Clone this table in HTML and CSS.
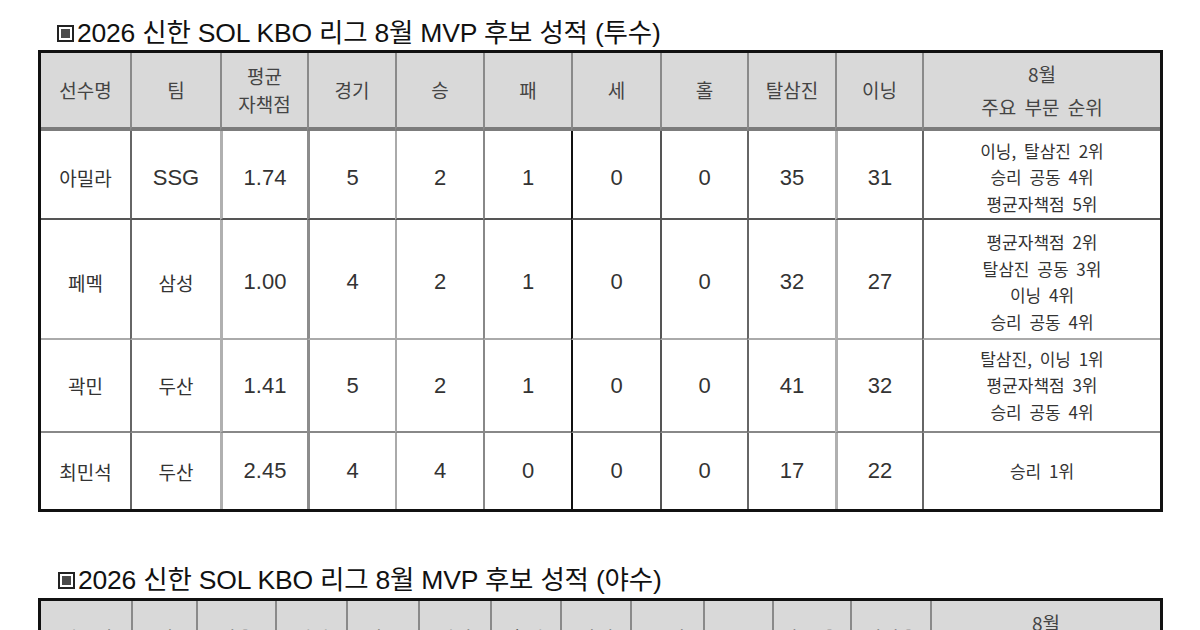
FILE: index.html
```html
<!DOCTYPE html>
<html lang="ko">
<head>
<meta charset="utf-8">
<title>2026 신한 SOL KBO 리그 8월 MVP 후보 성적</title>
<link rel="stylesheet" href="styles.css">
</head>
<body>
<div class="page">
  <h2 class="title"><span class="sq"></span>2026 신한 SOL KBO 리그 8월 MVP 후보 성적 (투수)</h2>
  <table class="stats pit">
    <colgroup>
      <col><col><col><col><col><col><col><col><col><col><col>
    </colgroup>
    <thead>
      <tr>
        <th>선수명</th><th>팀</th><th class="two">평균<br>자책점</th><th>경기</th><th>승</th><th>패</th><th>세</th><th>홀</th><th>탈삼진</th><th>이닝</th><th class="two wide">8월<br>주요 부문 순위</th>
      </tr>
    </thead>
    <tbody>
      <tr class="r1">
        <td class="k">아밀라</td><td>SSG</td><td>1.74</td><td>5</td><td>2</td><td>1</td><td>0</td><td>0</td><td>35</td><td>31</td><td class="rk">이닝, 탈삼진 2위<br>승리 공동 4위<br>평균자책점 5위</td>
      </tr>
      <tr class="r2">
        <td class="k">페멕</td><td class="k">삼성</td><td>1.00</td><td>4</td><td>2</td><td>1</td><td>0</td><td>0</td><td>32</td><td>27</td><td class="rk">평균자책점 2위<br>탈삼진 공동 3위<br>이닝 4위<br>승리 공동 4위</td>
      </tr>
      <tr class="r3">
        <td class="k">곽민</td><td class="k">두산</td><td>1.41</td><td>5</td><td>2</td><td>1</td><td>0</td><td>0</td><td>41</td><td>32</td><td class="rk">탈삼진, 이닝 1위<br>평균자책점 3위<br>승리 공동 4위</td>
      </tr>
      <tr class="r4">
        <td class="k">최민석</td><td class="k">두산</td><td>2.45</td><td>4</td><td>4</td><td>0</td><td>0</td><td>0</td><td>17</td><td>22</td><td class="rk">승리 1위</td>
      </tr>
    </tbody>
  </table>

  <h2 class="title t2"><span class="sq"></span>2026 신한 SOL KBO 리그 8월 MVP 후보 성적 (야수)</h2>
  <table class="stats bat">
    <colgroup>
      <col><col><col><col><col><col><col><col><col><col><col><col><col>
    </colgroup>
    <thead>
      <tr>
        <th>선수명</th><th>팀</th><th>타율</th><th>경기</th><th>타수</th><th>안타</th><th>홈런</th><th>타점</th><th>득점</th><th>도루</th><th>출루율</th><th>장타율</th><th class="two wide">8월<br>주요 부문 순위</th>
      </tr>
    </thead>
  </table>
</div>
</body>
</html>
```

FILE: styles.css
```css
html, body {
  margin: 0;
  padding: 0;
  background: #fff;
  overflow: hidden;
  height: 630px;
}

.page {
  padding: 18px 0 0 38px;
  font-family: "Liberation Sans", "Noto Sans CJK KR", sans-serif;
  color: #333;
}

.title {
  margin: 0 0 2px 0;
  padding-left: 19px;
  height: 30px;
  line-height: 30px;
  font-size: 26.5px;
  font-weight: normal;
  color: #111;
  display: flex;
  align-items: center;
  white-space: nowrap;
  letter-spacing: -0.2px;
}

.title.t2 {
  margin-top: 53px;
  margin-bottom: 3px;
  padding-left: 20px;
}

.sq {
  width: 17px;
  height: 17px;
  box-sizing: border-box;
  border: 2px solid #222;
  background: #4a4a4a;
  box-shadow: inset 0 0 0 2px #fff;
  margin-right: 3px;
  flex: none;
}

.stats {
  width: 1125px;
  table-layout: fixed;
  border-collapse: separate;
  border-spacing: 0;
  border: 3px solid #111;
}

.stats th,
.stats td {
  padding: 0;
  text-align: center;
  vertical-align: middle;
  box-sizing: border-box;
}

.stats th {
  background: #d9d9d9;
  color: #444;
  font-size: 19px;
  font-weight: normal;
  height: 78px;
  line-height: 28px;
  border-bottom: 4px solid #7c7c7c;
  font-family: "Noto Sans CJK KR", "Liberation Sans", sans-serif;
}

.stats th + th {
  border-left: 2px solid #8a8a8a;
}

.stats th.wide {
  line-height: 33px;
  word-spacing: 3px;
}

.stats td {
  font-size: 22px;
  color: #333;
}

.stats td.k {
  font-size: 19px;
  font-family: "Noto Sans CJK KR", "Liberation Sans", sans-serif;
}

.stats td.rk {
  font-size: 17px;
  line-height: 26.5px;
  word-spacing: 3px;
  font-family: "Noto Sans CJK KR", "Liberation Sans", sans-serif;
}

/* pitcher table column widths */
.pit col:nth-child(1) { width: 89px; }
.pit col:nth-child(2) { width: 90px; }
.pit col:nth-child(3) { width: 87px; }
.pit col:nth-child(4) { width: 88px; }
.pit col:nth-child(5) { width: 88px; }
.pit col:nth-child(6) { width: 88px; }
.pit col:nth-child(7) { width: 89px; }
.pit col:nth-child(8) { width: 87px; }
.pit col:nth-child(9) { width: 88px; }
.pit col:nth-child(10) { width: 87px; }
.pit col:nth-child(11) { width: 238px; }

/* body column rules */
.pit td + td { border-left: 2px solid #888; }
.pit td:nth-child(2) { border-left-color: #666; }
.pit td:nth-child(3) { border-left: 3px solid #b0b0b0; }
.pit td:nth-child(4) { border-left: 3px solid #8c8c8c; }
.pit td:nth-child(5) { border-left-color: #aaa; }
.pit td:nth-child(6) { border-left-color: #888; }
.pit td:nth-child(7) { border-left-color: #111; }
.pit td:nth-child(8) { border-left-color: #555; }
.pit td:nth-child(9) { border-left-color: #666; }
.pit td:nth-child(10) { border-left: 3px solid #b0b0b0; }
.pit td:nth-child(11) { border-left-color: #666; }

/* rows */
.pit .r1 td { height: 89px; padding-top: 6px; border-bottom: 2px solid #555; }
.pit .r2 td { height: 120px; padding-top: 6px; border-bottom: 2px solid #aaa; }
.pit .r3 td { height: 93px; border-bottom: 2px solid #888; }
.pit .r4 td { height: 76px; }

/* batter table column widths */
.bat col:nth-child(1) { width: 90px; }
.bat col:nth-child(2) { width: 65px; }
.bat col:nth-child(3) { width: 79px; }
.bat col:nth-child(4) { width: 71px; }
.bat col:nth-child(5) { width: 72px; }
.bat col:nth-child(6) { width: 72px; }
.bat col:nth-child(7) { width: 70px; }
.bat col:nth-child(8) { width: 70px; }
.bat col:nth-child(9) { width: 73px; }
.bat col:nth-child(10) { width: 69px; }
.bat col:nth-child(11) { width: 78px; }
.bat col:nth-child(12) { width: 80px; }
.bat col:nth-child(13) { width: 230px; }

.bat th.wide {
  line-height: 30px;
}
```
